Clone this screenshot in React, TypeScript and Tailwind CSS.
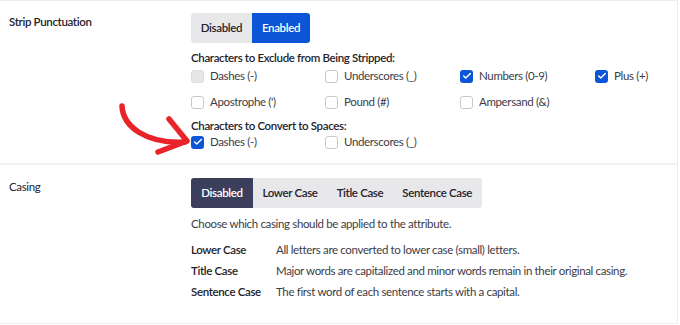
import { Check } from "lucide-react";

type Item = { label: string; state: "off" | "on" | "disabled" };

function Box({ item }: { item: Item }) {
  return (
    <div className="flex items-center gap-[6px] h-[16px]">
      {item.state === "on" ? (
        <span className="w-[13px] h-[13px] rounded-[3px] bg-[#0b55d6] flex items-center justify-center">
          <Check size={10} strokeWidth={3.5} color="#fff" />
        </span>
      ) : item.state === "disabled" ? (
        <span className="w-[13px] h-[13px] rounded-[3px] bg-[#e6e6e8] border border-[#dcdcdf]" />
      ) : (
        <span className="w-[13px] h-[13px] rounded-[3px] bg-white border border-[#c9c9cd]" />
      )}
      <span className="text-[#3c3c46]">{item.label}</span>
    </div>
  );
}

function Grid({ items }: { items: Item[] }) {
  return (
    <div className="grid grid-cols-[134px_135px_135px_auto] gap-y-[10px]">
      {items.map((it) => (
        <Box key={it.label} item={it} />
      ))}
    </div>
  );
}

export default function App() {
  const exclude: Item[] = [
    { label: "Dashes (-)", state: "disabled" },
    { label: "Underscores (_)", state: "off" },
    { label: "Numbers (0-9)", state: "on" },
    { label: "Plus (+)", state: "on" },
    { label: "Apostrophe (')", state: "off" },
    { label: "Pound (#)", state: "off" },
    { label: "Ampersand (&)", state: "off" },
  ];
  const convert: Item[] = [
    { label: "Dashes (-)", state: "on" },
    { label: "Underscores (_)", state: "off" },
  ];
  const casing = ["Disabled", "Lower Case", "Title Case", "Sentence Case"];
  const defs = [
    ["Lower Case", "All letters are converted to lower case (small) letters."],
    ["Title Case", "Major words are capitalized and minor words remain in their original casing."],
    ["Sentence Case", "The first word of each sentence starts with a capital."],
  ];

  return (
    <div
      className="relative w-[680px] h-[325px] bg-white text-[11.5px] leading-[16px] tracking-[-0.35px] text-[#2a2a33] overflow-hidden"
      style={{ fontFamily: 'Lato, "Noto Sans", sans-serif' }}
    >
      <div className="w-[678px] h-[324px] border-t border-r border-b border-[#ececee]">
        {/* Strip Punctuation */}
        <div className="flex h-[164px] border-b-2 border-[#f2f2f4]">
          <div className="w-[191px] pl-[9px] pt-[13px] font-semibold text-[#23232b]">Strip Punctuation</div>
          <div className="flex-1 pt-[12px]">
            <div className="flex">
              <button className="h-[30px] w-[61px] bg-[#e8e8eb] rounded-l-[3px] font-semibold text-[#23232b]">
                Disabled
              </button>
              <button className="h-[30px] w-[58px] bg-[#0b55d6] rounded-r-[3px] font-semibold text-white">
                Enabled
              </button>
            </div>
            <div className="mt-[7px] font-semibold text-[#23232b]">Characters to Exclude from Being Stripped:</div>
            <div className="mt-[2px]">
              <Grid items={exclude} />
            </div>
            <div className="mt-[8px] font-semibold text-[#23232b]">Characters to Convert to Spaces:</div>
            <div className="mt-0">
              <Grid items={convert} />
            </div>
          </div>
        </div>

        {/* Casing */}
        <div className="flex">
          <div className="w-[191px] pl-[9px] pt-[14px] text-[#23232b]">Casing</div>
          <div className="flex-1 pt-[13px]">
            <div className="flex w-max bg-[#e8e8eb] rounded-[3px]">
              {casing.map((c, i) => (
                <button
                  key={c}
                  className={
                    i === 0
                      ? "h-[30px] w-[62px] bg-[#3b3f5c] text-white font-semibold rounded-l-[3px]"
                      : "h-[30px] px-[9.5px] font-semibold text-[#23232b]"
                  }
                >
                  {c}
                </button>
              ))}
            </div>
            <div className="mt-[8px] text-[#3c3c46]">Choose which casing should be applied to the attribute.</div>
            <div className="mt-[10px] flex flex-col gap-[5px]">
              {defs.map(([t, d]) => (
                <div key={t} className="flex">
                  <span className="w-[85px] font-semibold text-[#23232b]">{t}</span>
                  <span className="text-[#3c3c46]">{d}</span>
                </div>
              ))}
            </div>
          </div>
        </div>
      </div>

      {/* red arrow */}
      <svg className="absolute left-[115px] top-[100px]" width="80" height="60" viewBox="0 0 80 60">
        <path
          d="M7 6 C 8 26, 30 44, 70 42"
          fill="none"
          stroke="#e8232a"
          strokeWidth="5.5"
          strokeLinecap="round"
        />
        <path
          d="M54 19 L 72 41 L 43 52"
          fill="none"
          stroke="#e8232a"
          strokeWidth="5.5"
          strokeLinecap="round"
          strokeLinejoin="round"
        />
      </svg>
    </div>
  );
}
